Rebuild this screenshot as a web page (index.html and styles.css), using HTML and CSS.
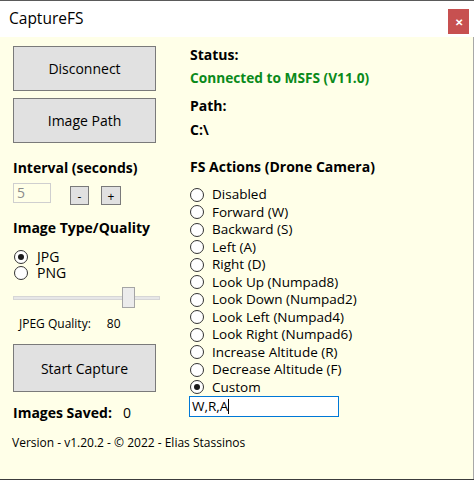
FILE: index.html
```html
<!DOCTYPE html>
<html lang="en">
<head>
  <meta charset="UTF-8">
  <title>CaptureFS</title>
  <link rel="stylesheet" href="styles.css">
</head>
<body>

<div class="window">
  <div class="titlebar">
    <span class="title">CaptureFS</span>
    <div class="close-btn">&#x2715;</div>
  </div>

  <div class="content">
    <div class="left-col">
      <div class="win-btn big-btn">Disconnect</div>
      <div class="win-btn big-btn second-btn">Image Path</div>

      <div class="heading interval-heading">Interval (seconds)</div>
      <div class="interval-row">
        <div class="num-box">5</div>
        <div class="win-btn small-btn minus-btn">-</div>
        <div class="win-btn small-btn plus-btn">+</div>
      </div>

      <div class="heading type-heading">Image Type/Quality</div>
      <div class="radio-list left-radios">
        <div class="radio-row"><span class="radio checked"></span>JPG</div>
        <div class="radio-row"><span class="radio"></span>PNG</div>
      </div>

      <div class="slider">
        <div class="slider-track"></div>
        <div class="slider-thumb" style="left: 109px"></div>
      </div>
      <div class="quality-row">
        <span>JPEG Quality:</span>
        <span class="quality-value">80</span>
      </div>

      <div class="win-btn big-btn capture-btn">Start Capture</div>

      <div class="saved-row">
        <span class="heading">Images Saved:</span>
        <span class="saved-value">0</span>
      </div>

      <div class="version">Version - v1.20.2 - &copy; 2022 - Elias Stassinos</div>
    </div>

    <div class="right-col">
      <div class="heading status-label">Status:</div>
      <div class="heading status-text">Connected to MSFS (V11.0)</div>
      <div class="heading path-label">Path:</div>
      <div class="heading path-text">C:\</div>

      <div class="heading actions-heading">FS Actions (Drone Camera)</div>
      <div class="radio-list action-radios">
        <div class="radio-row"><span class="radio"></span>Disabled</div>
        <div class="radio-row"><span class="radio"></span>Forward (W)</div>
        <div class="radio-row"><span class="radio"></span>Backward (S)</div>
        <div class="radio-row"><span class="radio"></span>Left (A)</div>
        <div class="radio-row"><span class="radio"></span>Right (D)</div>
        <div class="radio-row"><span class="radio"></span>Look Up (Numpad8)</div>
        <div class="radio-row"><span class="radio"></span>Look Down (Numpad2)</div>
        <div class="radio-row"><span class="radio"></span>Look Left (Numpad4)</div>
        <div class="radio-row"><span class="radio"></span>Look Right (Numpad6)</div>
        <div class="radio-row"><span class="radio"></span>Increase Altitude (R)</div>
        <div class="radio-row"><span class="radio"></span>Decrease Altitude (F)</div>
        <div class="radio-row"><span class="radio checked"></span>Custom</div>
      </div>
      <div class="custom-box">W,R,A<span class="caret"></span></div>
    </div>
  </div>
</div>

</body>
</html>
```

FILE: styles.css
```css
body {
  margin: 0;
  padding: 0;
  font-family: "Open Sans", "Noto Sans", sans-serif;
  color: #000;
  background: #fff;
}

.window {
  width: 474px;
  height: 480px;
  display: flex;
  flex-direction: column;
  box-sizing: border-box;
  border-top: 1px solid #5a5a5a;
  border-bottom: 1px solid #3c3c3c;
}

.titlebar {
  height: 36px;
  background: #fff;
  display: flex;
  align-items: flex-start;
  justify-content: space-between;
}

.title {
  font-size: 15.5px;
  line-height: 20px;
  margin-top: 7px;
  margin-left: 9px;
}

.close-btn {
  width: 21px;
  height: 25px;
  margin-top: 8px;
  margin-right: 5px;
  background: #c75050;
  color: #fff;
  font-size: 10px;
  font-weight: bold;
  display: flex;
  align-items: center;
  justify-content: center;
}

.content {
  flex: 1;
  background: #ffffe8;
  border-right: 1px solid #a8a8a8;
  display: flex;
}

.left-col {
  width: 143px;
  margin-left: 13px;
  padding-top: 9px;
  display: flex;
  flex-direction: column;
}

.right-col {
  margin-left: 34px;
  padding-top: 8px;
  display: flex;
  flex-direction: column;
}

.heading {
  font-weight: bold;
  font-size: 14px;
  line-height: 20px;
}

.win-btn {
  box-sizing: border-box;
  background: #e1e1e1;
  border: 1px solid #7a7a7a;
  display: flex;
  align-items: center;
  justify-content: center;
}

.big-btn {
  width: 143px;
  height: 45px;
  font-size: 14px;
}

.second-btn {
  margin-top: 7px;
}

.interval-heading {
  margin-top: 15px;
}

.interval-row {
  display: flex;
  align-items: flex-start;
  margin-top: 5px;
}

.num-box {
  box-sizing: border-box;
  width: 38px;
  height: 20px;
  border: 1px solid #cfcfcf;
  color: #8c8c8c;
  font-size: 14px;
  line-height: 18px;
  padding-left: 3px;
}

.small-btn {
  width: 19px;
  height: 19px;
  margin-top: 3px;
  font-size: 12px;
  align-items: flex-end;
  line-height: 14px;
}

.minus-btn {
  margin-left: 19px;
}

.plus-btn {
  margin-left: 12px;
  width: 20px;
}

.type-heading {
  margin-top: 13px;
}

.radio-list {
  display: flex;
  flex-direction: column;
}

.left-radios {
  margin-top: 11px;
}

.radio-row {
  display: flex;
  align-items: center;
  height: 16px;
  line-height: 16px;
  font-size: 14px;
}

.action-radios .radio-row {
  height: 17.5px;
  line-height: 17.5px;
  font-size: 13.5px;
}

.radio {
  box-sizing: border-box;
  flex-shrink: 0;
  width: 14px;
  height: 14px;
  border: 1px solid #333;
  border-radius: 50%;
  background: #fff;
  margin-left: 1px;
  margin-right: 9px;
  display: flex;
  align-items: center;
  justify-content: center;
}

.action-radios .radio {
  margin-left: 0;
  margin-right: 8px;
}

.radio.checked::after {
  content: "";
  width: 6px;
  height: 6px;
  border-radius: 50%;
  background: #1a1a1a;
}

.slider {
  position: relative;
  height: 21px;
  margin-top: 6px;
  width: 147px;
}

.slider-track {
  margin-top: 9px;
  height: 4px;
  box-sizing: border-box;
  background: #e7e7e7;
  border: 1px solid #d6d6d6;
}

.slider-thumb {
  position: absolute;
  top: 0;
  width: 13px;
  height: 21px;
  box-sizing: border-box;
  background: #ececec;
  border: 1px solid #a5a5a5;
}

.quality-row {
  display: flex;
  font-size: 12px;
  line-height: 18px;
  margin-top: 7px;
  margin-left: 6px;
}

.quality-value {
  margin-left: 16px;
}

.capture-btn {
  margin-top: 11px;
  height: 48px;
}

.saved-row {
  display: flex;
  align-items: baseline;
  margin-top: 11px;
}

.saved-value {
  font-size: 14px;
  margin-left: 11px;
}

.version {
  font-size: 12px;
  line-height: 18px;
  margin-top: 11px;
  margin-left: -1px;
  white-space: nowrap;
}

.status-text {
  color: #0a8a1a;
  font-size: 13.7px;
  margin-top: 3px;
}

.path-label {
  margin-top: 8px;
}

.path-text {
  margin-top: 4px;
}

.actions-heading {
  margin-top: 17px;
}

.action-radios {
  margin-top: 9px;
}

.custom-box {
  box-sizing: border-box;
  width: 150px;
  height: 21px;
  margin-left: -1px;
  border: 1px solid #0078d7;
  background: #fff;
  font-size: 13.5px;
  line-height: 19px;
  padding-left: 2px;
  display: flex;
  align-items: center;
}

.caret {
  width: 1px;
  height: 15px;
  background: #000;
}
```
